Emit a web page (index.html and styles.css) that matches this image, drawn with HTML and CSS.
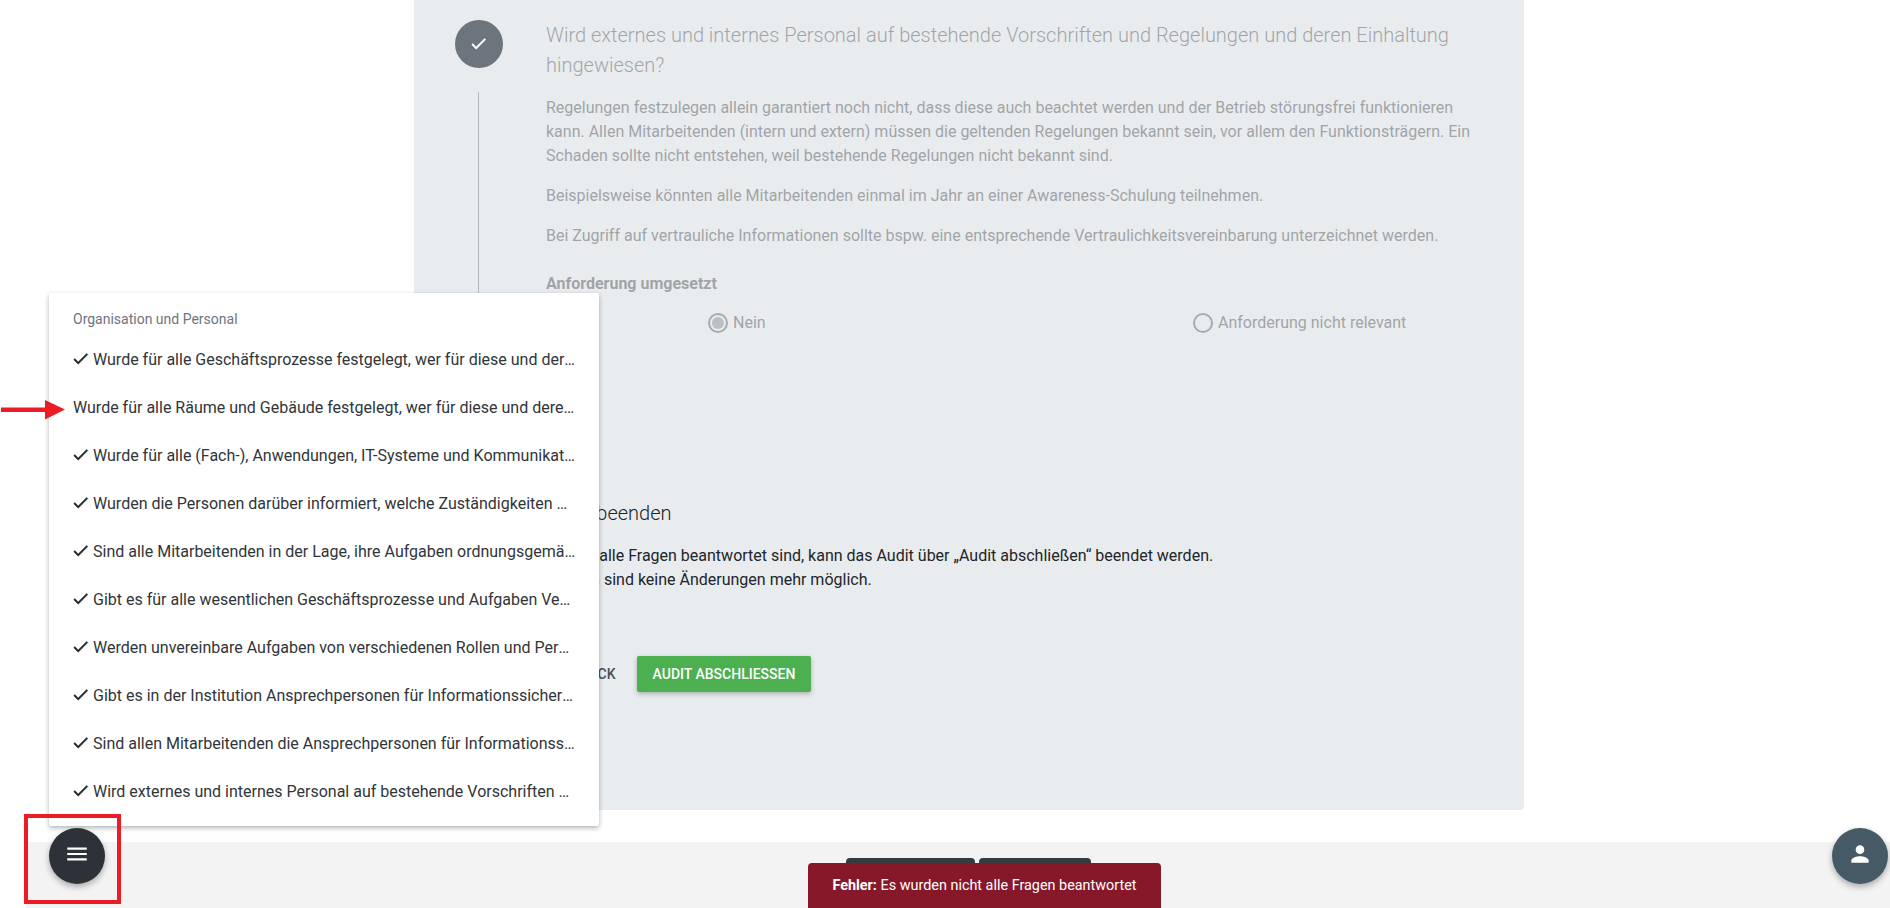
FILE: index.html
```html
<!DOCTYPE html>
<html lang="de">
<head>
<meta charset="utf-8">
<title>Audit</title>
<link rel="stylesheet" href="styles.css">
</head>
<body>
<div class="page">
  <main class="card">
    <section class="step step-first">
      <div class="step-circle">
        <svg class="step-check" viewBox="2.5 5 20 15"><path d="M9 16.17L4.83 12l-1.42 1.41L9 19 21 7l-1.41-1.41z"/></svg>
      </div>
      <h2 class="step-title muted">Wird externes und internes Personal auf bestehende Vorschriften und Regelungen und deren Einhaltung hingewiesen?</h2>
      <div class="step-rail"></div>
      <div class="step-body muted">
        <p class="para">Regelungen festzulegen allein garantiert noch nicht, dass diese auch beachtet werden und der Betrieb störungsfrei funktionieren kann. Allen Mitarbeitenden (intern und extern) müssen die geltenden Regelungen bekannt sein, vor allem den Funktionsträgern. Ein Schaden sollte nicht entstehen, weil bestehende Regelungen nicht bekannt sind.</p>
        <p class="para">Beispielsweise könnten alle Mitarbeitenden einmal im Jahr an einer Awareness-Schulung teilnehmen.</p>
        <p class="para">Bei Zugriff auf vertrauliche Informationen sollte bspw. eine entsprechende Vertraulichkeitsvereinbarung unterzeichnet werden.</p>
        <div class="field-label">Anforderung umgesetzt</div>
        <div class="radios">
          <div class="radio"><span class="radio-ring"></span><span>Ja</span></div>
          <div class="radio"><span class="radio-ring radio-on"></span><span>Nein</span></div>
          <div class="radio"><span class="radio-ring"></span><span>Anforderung nicht relevant</span></div>
        </div>
      </div>
    </section>
    <section class="step step-last">
      <div class="step-circle">
        <svg class="step-check" viewBox="2.5 5 20 15"><path d="M9 16.17L4.83 12l-1.42 1.41L9 19 21 7l-1.41-1.41z"/></svg>
      </div>
      <h2 class="step-title">Audit beenden</h2>
      <div class="step-rail"></div>
      <div class="step-body">
        <p class="para">Sobald alle Fragen beantwortet sind, kann das Audit über „Audit abschließen“ beendet werden.<br>Danach sind keine Änderungen mehr möglich.</p>
        <div class="actions">
          <button class="btn btn-flat">Zurück</button>
          <button class="btn btn-green">Audit abschließen</button>
        </div>
      </div>
    </section>
  </main>
  <footer class="footer">
    <button class="footer-btn footer-btn-a"></button>
    <button class="footer-btn footer-btn-b"></button>
  </footer>
</div>

<nav class="menu">
  <div class="menu-title">Organisation und Personal</div>
  <ul class="menu-list">
    <li class="menu-item"><svg class="tick" viewBox="2.5 5 20 15"><path d="M9 16.17L4.83 12l-1.42 1.41L9 19 21 7l-1.41-1.41z"/></svg>Wurde für alle Geschäftsprozesse festgelegt, wer für diese und deren Sicherheit verantwortlich ist?</li>
    <li class="menu-item">Wurde für alle Räume und Gebäude festgelegt, wer für diese und deren Sicherheit verantwortlich ist?</li>
    <li class="menu-item"><svg class="tick" viewBox="2.5 5 20 15"><path d="M9 16.17L4.83 12l-1.42 1.41L9 19 21 7l-1.41-1.41z"/></svg>Wurde für alle (Fach-), Anwendungen, IT-Systeme und Kommunikationsverbindungen festgelegt, wer verantwortlich ist?</li>
    <li class="menu-item"><svg class="tick" viewBox="2.5 5 20 15"><path d="M9 16.17L4.83 12l-1.42 1.41L9 19 21 7l-1.41-1.41z"/></svg>Wurden die Personen darüber informiert, welche Zuständigkeiten wahrzunehmen sind?</li>
    <li class="menu-item"><svg class="tick" viewBox="2.5 5 20 15"><path d="M9 16.17L4.83 12l-1.42 1.41L9 19 21 7l-1.41-1.41z"/></svg>Sind alle Mitarbeitenden in der Lage, ihre Aufgaben ordnungsgemäß zu erfüllen?</li>
    <li class="menu-item"><svg class="tick" viewBox="2.5 5 20 15"><path d="M9 16.17L4.83 12l-1.42 1.41L9 19 21 7l-1.41-1.41z"/></svg>Gibt es für alle wesentlichen Geschäftsprozesse und Aufgaben Vertretungsregelungen?</li>
    <li class="menu-item"><svg class="tick" viewBox="2.5 5 20 15"><path d="M9 16.17L4.83 12l-1.42 1.41L9 19 21 7l-1.41-1.41z"/></svg>Werden unvereinbare Aufgaben von verschiedenen Rollen und Personen wahrgenommen?</li>
    <li class="menu-item"><svg class="tick" viewBox="2.5 5 20 15"><path d="M9 16.17L4.83 12l-1.42 1.41L9 19 21 7l-1.41-1.41z"/></svg>Gibt es in der Institution Ansprechpersonen für Informationssicherheit?</li>
    <li class="menu-item"><svg class="tick" viewBox="2.5 5 20 15"><path d="M9 16.17L4.83 12l-1.42 1.41L9 19 21 7l-1.41-1.41z"/></svg>Sind allen Mitarbeitenden die Ansprechpersonen für Informationssicherheit bekannt?</li>
    <li class="menu-item"><svg class="tick" viewBox="2.5 5 20 15"><path d="M9 16.17L4.83 12l-1.42 1.41L9 19 21 7l-1.41-1.41z"/></svg>Wird externes und internes Personal auf bestehende Vorschriften und Regelungen hingewiesen?</li>
  </ul>
</nav>

<button class="fab fab-menu" aria-label="Menü">
  <svg class="fab-icon" viewBox="0 0 24 24"><path d="M3 18h18v-2H3v2zm0-5h18v-2H3v2zm0-7v2h18V6H3z"/></svg>
</button>
<button class="fab fab-user" aria-label="Benutzer">
  <svg class="fab-icon" viewBox="0 0 24 24"><path d="M12 12c2.21 0 4-1.79 4-4s-1.79-4-4-4-4 1.79-4 4 1.79 4 4 4zm0 2c-2.67 0-8 1.34-8 4v2h16v-2c0-2.66-5.33-4-8-4z"/></svg>
</button>

<div class="toast"><strong>Fehler:</strong> Es wurden nicht alle Fragen beantwortet</div>

<div class="mark-rect"></div>
<svg class="mark-arrow" viewBox="0 0 65 20"><path d="M1 7.5H45V0L65 9.5 45 19.5V12H1z"/></svg>
</body>
</html>
```
FILE: styles.css
```css
* { box-sizing: border-box; }

html, body {
  margin: 0;
  height: 908px;
  overflow: hidden;
  background: #fff;
  font-family: Roboto, "Liberation Sans", sans-serif;
  font-size: 16px;
  line-height: 24px;
  color: #212529;
}

.page {
  display: flex;
  flex-direction: column;
  height: 908px;
}

/* main card */
.card {
  width: 1110px;
  height: 810px;
  margin: 0 0 32px 414px;
  padding: 20px 40px 0 41px;
  background: #e9ecef;
  border-radius: 0 0 4px 4px;
  flex: none;
}

.step {
  display: grid;
  grid-template-columns: 48px 1fr;
  column-gap: 43px;
}

.step-first { margin-bottom: 163px; }

.step-last { grid-template-rows: 46px auto; }

.step-circle {
  width: 48px;
  height: 48px;
  border-radius: 50%;
  background: #6c757d;
  display: flex;
  align-items: center;
  justify-content: center;
}

.step-check {
  width: 16px;
  height: 12px;
  fill: #fff;
  stroke: #fff;
  stroke-width: .7;
}

.step-title {
  margin: 0;
  font-size: 20px;
  line-height: 30px;
  font-weight: 300;
  color: #212529;
}

.step-rail {
  width: 1px;
  margin: 12px 0 0 23px;
  background: #b5b9bd;
}

.step-first .step-body { padding-top: 16px; }

.muted { opacity: .36; }

.para {
  margin: 0 0 16px;
  font-weight: 400;
}

.field-label {
  margin-top: 24px;
  font-weight: 700;
}

.radios {
  display: grid;
  grid-template-columns: 162px 485px auto;
  margin-top: 15px;
}

.radio {
  display: flex;
  align-items: center;
  gap: 5px;
}

.radio-ring {
  width: 20px;
  height: 20px;
  border: 2px solid #343a40;
  border-radius: 50%;
  flex: none;
  display: flex;
  align-items: center;
  justify-content: center;
}

.radio-on::after {
  content: "";
  width: 12px;
  height: 12px;
  border-radius: 50%;
  background: #6c757d;
}

.actions {
  display: flex;
  gap: 5px;
  margin-top: 64px;
}

.btn {
  height: 36px;
  padding: 0 16px;
  border: 0;
  border-radius: 2px;
  font: 500 14px/36px Roboto, "Liberation Sans", sans-serif;
  text-transform: uppercase;
  background: transparent;
}

.btn-flat { color: #495057; }

.btn-green {
  background: #4caf50;
  color: #fff;
  box-shadow: 0 2px 5px rgba(0, 0, 0, .26);
}

/* footer */
.footer {
  flex: 1;
  margin-left: 26px;
  padding: 16px 0 0 20px;
  background: #f3f3f3;
  display: flex;
  justify-content: center;
  align-items: flex-start;
  gap: 4px;
}

.footer-btn {
  height: 36px;
  border: 0;
  border-radius: 4px;
  background: #343a40;
}

.footer-btn-a { width: 129px; }
.footer-btn-b { width: 112px; }

/* question menu */
.menu {
  position: absolute;
  left: 49px;
  top: 293px;
  width: 550px;
  padding: 16px 23px 10px 24px;
  background: #fff;
  border-radius: 2px;
  box-shadow: 0 2px 5px rgba(0, 0, 0, .3);
}

.menu-title {
  font-size: 14px;
  line-height: 21px;
  color: #6c757d;
  margin-bottom: 6px;
}

.menu-list {
  margin: 0;
  padding: 0;
  list-style: none;
}

.menu-item {
  height: 48px;
  line-height: 48px;
  white-space: nowrap;
  overflow: hidden;
  text-overflow: ellipsis;
  color: #30353a;
}

.tick {
  width: 16px;
  height: 12px;
  margin-right: 4px;
  fill: #212529;
  stroke: #212529;
  stroke-width: .6;
}

/* floating buttons */
.fab {
  position: absolute;
  top: 828px;
  width: 56px;
  height: 56px;
  padding: 0 0 4px;
  border: 0;
  border-radius: 50%;
  display: flex;
  align-items: center;
  justify-content: center;
  box-shadow: 0 3px 6px rgba(0, 0, 0, .3);
}

.fab-icon {
  width: 26px;
  height: 26px;
  fill: #fff;
}

.fab-menu {
  left: 49px;
  background: #2d3238;
}

.fab-user {
  left: 1832px;
  background: #455a64;
}

/* error toast */
.toast {
  position: absolute;
  left: 808px;
  top: 863px;
  width: 353px;
  padding: 13px 0 15px;
  background: #87182a;
  border-radius: 4px 4px 0 0;
  color: #fff;
  font-size: 14.4px;
  line-height: 20px;
  text-align: center;
}

/* annotations */
.mark-rect {
  position: absolute;
  left: 24px;
  top: 814px;
  width: 97px;
  height: 90px;
  border: 4px solid #ed1c24;
}

.mark-arrow {
  position: absolute;
  left: 0;
  top: 400px;
  width: 65px;
  height: 20px;
  fill: #ed1c24;
}
```
